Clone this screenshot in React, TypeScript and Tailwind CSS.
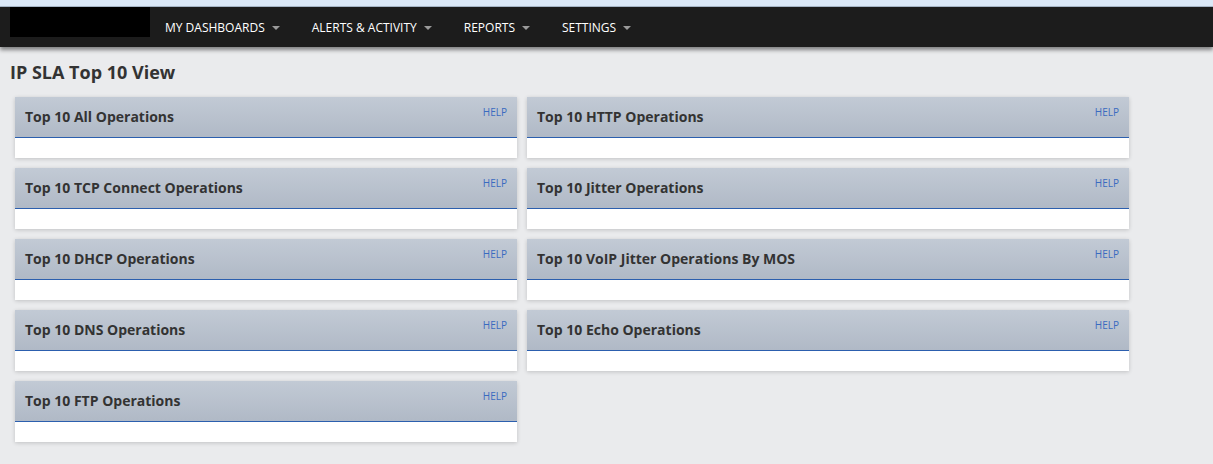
const navItems = ["MY DASHBOARDS", "ALERTS & ACTIVITY", "REPORTS", "SETTINGS"]

const panels = [
  "Top 10 All Operations",
  "Top 10 HTTP Operations",
  "Top 10 TCP Connect Operations",
  "Top 10 Jitter Operations",
  "Top 10 DHCP Operations",
  "Top 10 VoIP Jitter Operations By MOS",
  "Top 10 DNS Operations",
  "Top 10 Echo Operations",
  "Top 10 FTP Operations",
]

function Panel({ title }: { title: string }) {
  return (
    <div className="bg-white shadow-[0_1px_4px_rgba(0,0,0,0.18)]">
      <div className="relative h-[40px] bg-[linear-gradient(to_bottom,#c2cad5,#b0b9c6)] flex items-center pl-[10px]">
        <h2 className="text-[14px] font-bold text-[#333333] leading-none">{title}</h2>
        <a className="absolute right-[10px] top-[10px] text-[10px] leading-none text-[#3a6bc0]">HELP</a>
      </div>
      <div className="h-px bg-[#2c5fae]" />
      <div className="h-[20px]" />
    </div>
  )
}

export default function App() {
  return (
    <div className="min-h-[464px] bg-[#eaebed] font-['Open_Sans',sans-serif]">
      {/* browser bookmark strip */}
      <div className="h-[7px] bg-[#dbe8f7] border-b border-[#a9b8c9]" />

      {/* Nav */}
      <div className="h-[40px] bg-[#1c1c1c] flex items-start shadow-[0_3px_4px_rgba(0,0,0,0.45)] relative z-10">
        <div className="ml-[10px] w-[140px] h-[30px] bg-black" />
        <nav className="flex items-center gap-[32px] ml-[15px] h-[40px] pt-[1px]">
          {navItems.map((n) => (
            <div key={n} className="flex items-center text-[12px] text-white">
              <span>{n}</span>
              <span className="ml-[7px] w-0 h-0 border-l-[4px] border-r-[4px] border-t-[4px] border-l-transparent border-r-transparent border-t-[#9a9a9a]" />
            </div>
          ))}
        </nav>
      </div>

      <div className="pl-[10px] pt-[14px]">
        <h1 className="text-[18px] font-bold text-[#333333] leading-[22px]">IP SLA Top 10 View</h1>
      </div>

      <div className="grid grid-cols-[502px_602px] gap-[10px] pl-[15px] pt-[14px] pb-[22px]">
        {panels.map((p) => (
          <Panel key={p} title={p} />
        ))}
      </div>
    </div>
  )
}
